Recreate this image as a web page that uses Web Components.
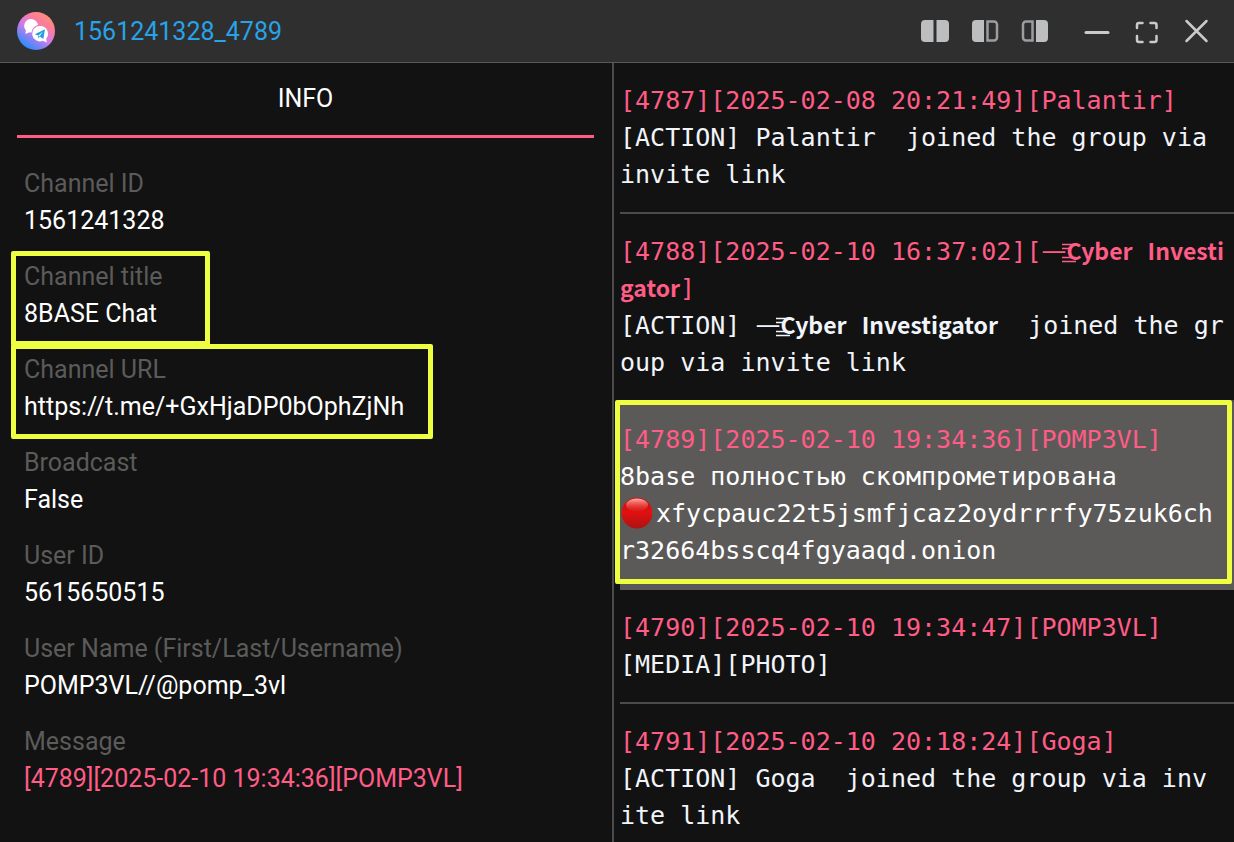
<!DOCTYPE html>
<html lang="en">
<head>
<meta charset="utf-8">
<title>1561241328_4789</title>
<style>
  html, body { margin: 0; height: 100%; background: #121212; }
  body { font-family: Roboto, sans-serif; color: #fff; overflow: hidden; }
</style>
</head>
<body>
<chat-window></chat-window>

<template id="tpl-window">
  <style>
    :host { display: flex; flex-direction: column; height: 100vh; background: #121212; }
    main { flex: 1; min-height: 0; display: grid; grid-template-columns: minmax(0, 1fr) minmax(0, 1fr); }
    info-panel { border-right: 2px solid #4b4b4b; box-sizing: border-box; margin-right: 3px; }
    message-list { overflow: hidden; margin-left: -3px; }
  </style>
  <title-bar>1561241328_4789</title-bar>
  <main>
    <info-panel>
      <info-field label="Channel ID">1561241328</info-field>
      <info-field label="Channel title" mark="title">8BASE Chat</info-field>
      <info-field label="Channel URL" mark="url"><a href="https://t.me/+GxHjaDP0bOphZjNh">https://t.me/+GxHjaDP0bOphZjNh</a></info-field>
      <info-field label="Broadcast">False</info-field>
      <info-field label="User ID">5615650515</info-field>
      <info-field label="User Name (First/Last/Username)">POMP3VL//@pomp_3vl</info-field>
      <info-field label="Message" accent>[4789][2025-02-10 19:34:36][POMP3VL]</info-field>
    </info-panel>
    <message-list>
      <chat-message><span slot="head">[4787][2025-02-08 20:21:49][Palantir]</span>[ACTION] Palantir  joined the group via
invite link</chat-message>
      <chat-message><span slot="head">[4788][2025-02-10 16:37:02][<fancy-text dash>Cyber</fancy-text> <fancy-text>Investi</fancy-text>
<fancy-text>gator</fancy-text>]</span>[ACTION] <fancy-text dash>Cyber</fancy-text> <fancy-text>Investigator</fancy-text>  joined the gr
oup via invite link</chat-message>
      <chat-message selected><span slot="head">[4789][2025-02-10 19:34:36][POMP3VL]</span>8base полностью скомпрометирована
<red-ball></red-ball>xfycpauc22t5jsmfjcaz2oydrrrfy75zuk6ch
r32664bsscq4fgyaaqd.onion</chat-message>
      <chat-message><span slot="head">[4790][2025-02-10 19:34:47][POMP3VL]</span>[MEDIA][PHOTO]</chat-message>
      <chat-message><span slot="head">[4791][2025-02-10 20:18:24][Goga]</span>[ACTION] Goga  joined the group via inv
ite link</chat-message>
    </message-list>
  </main>
</template>

<template id="tpl-title">
  <style>
    :host { display: block; flex: none; background: #2f2f2f; border-bottom: 1px solid #5a5a5a; }
    header { display: flex; align-items: center; height: 62px; padding: 0 18px 0 17px; box-sizing: border-box; }
    .logo { width: 38px; height: 38px; display: block; }
    h1 { flex: 1; margin: 0 0 0 19px; font-size: 25px; line-height: 37px; font-weight: 400; color: #28a2e8; }
    nav { display: flex; align-items: center; }
    button { width: 50px; height: 50px; padding: 0; border: 0; background: none; display: grid; place-items: center; color: #c9cacc; }
    .layouts { margin-right: 12px; }
    button svg { width: 30px; height: 30px; display: block; }
    nav:last-child button:last-child { width: 38px; margin-left: 6px; }
  </style>
  <header>
    <svg class="logo" viewBox="0 0 38 38" aria-hidden="true">
      <defs><linearGradient id="g" x1="7" y1="34" x2="28" y2="4" gradientUnits="userSpaceOnUse">
        <stop offset="0" stop-color="#2b8cff"/><stop offset=".5" stop-color="#d77be8"/><stop offset=".8" stop-color="#fb7d9c"/><stop offset="1" stop-color="#ff8a80"/>
      </linearGradient></defs>
      <circle cx="19" cy="19" r="19" fill="url(#g)"/>
      <path d="M14 7a7 7 0 0 1 7 6 9 9 0 0 0-6.500 7.500 7 7 0 0 1-2-.2L8.400 22l.4-3.600A7 7 0 0 1 14 7z" fill="#fff"/>
      <path d="M23.500 14a7.700 7.700 0 0 1 5.800 12.500l.4 4-4-1.700A7.700 7.700 0 1 1 23.500 14z" fill="#fff"/>
      <path d="M17.800 22.300 28 17.300 26.300 27 22.800 24.600 21.400 26.400 21.200 23.600z" fill="#239fdc"/>
      <path d="M21.200 23.800 26 19.600 22.600 24.300z" fill="#fff"/>
    </svg>
    <h1><slot></slot></h1>
    <nav class="layouts">
      <button aria-label="Both panels"><svg viewBox="0 0 30 30" fill="#bdbec0"><path d="M5 4h8.500v22H5a4 4 0 0 1-4-4V8a4 4 0 0 1 4-4zM16.500 4H25a4 4 0 0 1 4 4v14a4 4 0 0 1-4 4h-8.500z"/></svg></button>
      <button aria-label="Left panel"><svg viewBox="0 0 30 30" fill="#bdbec0"><path d="M6 4h8v22H6a4 4 0 0 1-4-4V8a4 4 0 0 1 4-4z"/><path d="M17.500 5.500H24a3 3 0 0 1 3 3v13a3 3 0 0 1-3 3h-6.500z" fill="none" stroke="#9c9d9f" stroke-width="2.500"/></svg></button>
      <button aria-label="Right panel"><svg viewBox="0 0 30 30" fill="#bdbec0"><path d="M12.500 5.500H6a3 3 0 0 0-3 3v13a3 3 0 0 0 3 3h6.500z" fill="none" stroke="#9c9d9f" stroke-width="2.500"/><path d="M16 4h8a4 4 0 0 1 4 4v14a4 4 0 0 1-4 4h-8z"/></svg></button>
    </nav>
    <nav>
      <button aria-label="Minimise"><svg viewBox="0 0 30 30" fill="none" stroke="currentColor" stroke-width="3" stroke-linecap="round"><path d="M4 16.500h22"/></svg></button>
      <button aria-label="Full screen"><svg viewBox="0 0 30 30" fill="none" stroke="currentColor" stroke-width="2.500" stroke-linecap="round"><path d="M5 12V9a2 2 0 0 1 2-2h3.500M18.500 7h4a2 2 0 0 1 2 2v3M24.500 20v4a2 2 0 0 1-2 2h-4M10.500 26H7a2 2 0 0 1-2-2v-4"/></svg></button>
      <button aria-label="Close"><svg viewBox="0 0 30 30" fill="none" stroke="currentColor" stroke-width="2.500" stroke-linecap="round"><path d="M4.500 5l20 20M24.500 5l-20 20"/></svg></button>
    </nav>
  </header>
</template>

<template id="tpl-info">
  <style>
    :host { display: block; padding: 0 18px 0 17px; }
    h2 { margin: 0 0 27px; padding: 17px 0 18px; border-bottom: 3px solid #ff5c86; text-align: center; font-size: 25px; line-height: 37px; font-weight: 400; }
    dl { margin: 0; padding-left: 7px; display: grid; gap: 19px; }
  </style>
  <h2>INFO</h2>
  <dl><slot></slot></dl>
</template>

<template id="tpl-field">
  <style>
    :host { display: block; position: relative; font-size: 25px; line-height: 37px; }
    dt { color: #5b5b5a; }
    dd { margin: 0; color: #fff; }
    :host([accent]) dd { color: #ff5c86; }
    ::slotted(a) { color: inherit; text-decoration: none; }
    i { display: none; }
    :host([mark]) i { display: block; position: absolute; top: -7px; left: -13px; height: 95px; box-sizing: border-box; border: 5px solid #eeff41; border-radius: 2px; }
    :host([mark="title"]) i { width: 199px; }
    :host([mark="url"]) i { width: 422px; }
  </style>
  <i></i>
  <dt></dt>
  <dd><slot></slot></dd>
</template>

<template id="tpl-list">
  <style>
    :host { display: block; padding-left: 6px; font: 25px/37px "DejaVu Sans Mono", monospace; }
  </style>
  <slot></slot>
</template>

<template id="tpl-message">
  <style>
    :host { display: block; position: relative; padding: 19px 0; border-bottom: 2px solid #4b4b4b; color: #f1f5fb; }
    .head { color: #ff5c86; }
    div { white-space: pre; }
    :host([selected]) { background: #5b5a58; border-color: #5b5a58; color: #fff; }
    i { display: none; }
    :host([selected]) i { display: block; position: absolute; inset: -2px 2px 4px -5px; border: 5px solid #eeff41; border-radius: 2px; }
  </style>
  <div class="head"><slot name="head"></slot></div>
  <div><slot></slot></div>
  <i></i>
</template>

<template id="tpl-fancy"><style>
    :host { display: inline; font-family: "Noto Sans CJK JP", sans-serif; font-size: 23px; font-weight: 700; line-height: 1; }
    .dash { display: none; position: relative; font-weight: 400; font-size: 28px; }
    :host([dash]) .dash { display: inline; }
    svg { position: absolute; left: 21px; bottom: 5px; width: 15px; height: 20px; }
  </style><span class="dash">—<svg viewBox="0 0 15 20" stroke="currentColor" stroke-width="1.500" aria-hidden="true"><path d="M0 1.500h14M0 5.500h9M0 14.500h14M0 18.500h14"/></svg></span><slot></slot></template>

<template id="tpl-ball"><style>
    :host { display: inline-block; width: 36px; height: 32px; vertical-align: -7px; line-height: 0; }
    svg { width: 32px; height: 32px; }
  </style><svg viewBox="0 0 32 32" role="img" aria-label="Red circle">
    <defs>
      <linearGradient id="b" x1="0" y1="0" x2="0" y2="1"><stop offset="0" stop-color="#c81310"/><stop offset=".5" stop-color="#e01010"/><stop offset="1" stop-color="#ac1313"/></linearGradient>
      <linearGradient id="h" x1="0" y1="0" x2="0" y2="1"><stop offset="0" stop-color="#ffb0a8"/><stop offset="1" stop-color="#e8302c" stop-opacity=".2"/></linearGradient>
    </defs>
    <circle cx="17" cy="16" r="15.500" fill="url(#b)"/>
    <ellipse cx="17" cy="8" rx="11" ry="6.500" fill="url(#h)"/>
  </svg></template>

<script>
  const define = (name, id, setup) => customElements.define(name, class extends HTMLElement {
    constructor() {
      super();
      this.attachShadow({ mode: "open" }).append(document.getElementById(id).content.cloneNode(true));
    }
    connectedCallback() { if (setup) setup(this); }
  });
  define("title-bar", "tpl-title");
  define("info-panel", "tpl-info");
  define("info-field", "tpl-field", el => { el.shadowRoot.querySelector("dt").textContent = el.getAttribute("label"); });
  define("message-list", "tpl-list");
  define("chat-message", "tpl-message");
  define("fancy-text", "tpl-fancy");
  define("red-ball", "tpl-ball");
  define("chat-window", "tpl-window");
</script>
</body>
</html>
